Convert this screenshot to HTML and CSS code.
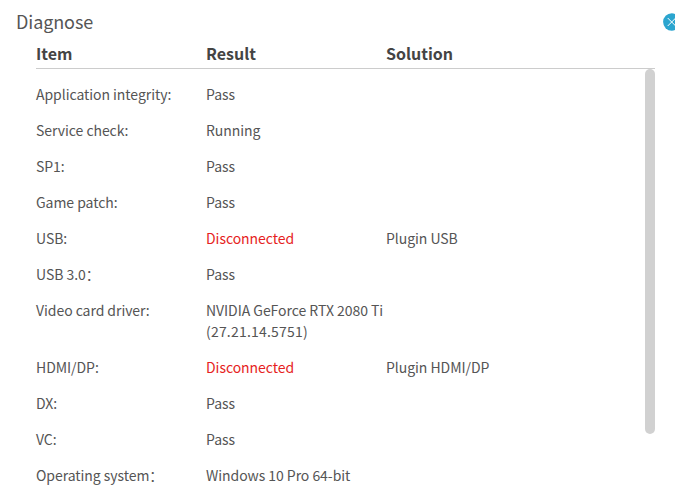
FILE: index.html
```html
<!DOCTYPE html>
<html lang="en"><head><meta charset="utf-8"><title>Diagnose</title><link rel="stylesheet" href="styles.css"></head>
<body><main class="dialog">
<header class="titlebar"><h1>Diagnose</h1><svg class="close" width="12" height="18" viewBox="0 0 12 18"><circle cx="8.8" cy="9" r="8.7" fill="#2ba5cf"/><path d="M4.7 5l8 8M12.7 5l-8 8" stroke="#fff" stroke-width="1"/></svg></header>
<section class="report">
<div class="row head"><b>Item</b><b>Result</b><b>Solution</b></div>
<div class="list">
<div class="row"><span>Application integrity:</span><span>Pass</span></div>
<div class="row"><span>Service check:</span><span>Running</span></div>
<div class="row"><span>SP1:</span><span>Pass</span></div>
<div class="row"><span>Game patch:</span><span>Pass</span></div>
<div class="row"><span>USB:</span><span class="bad">Disconnected</span><span>Plugin USB</span></div>
<div class="row"><span>USB 3.0：</span><span>Pass</span></div>
<div class="row"><span>Video card driver:</span><span>NVIDIA GeForce RTX 2080 Ti<br><span class="version">(27.21.14.5751)</span></span></div>
<div class="row"><span>HDMI/DP:</span><span class="bad">Disconnected</span><span>Plugin HDMI/DP</span></div>
<div class="row"><span>DX:</span><span>Pass</span></div>
<div class="row"><span>VC:</span><span>Pass</span></div>
<div class="row"><span>Operating system：</span><span>Windows 10 Pro 64-bit</span></div>
<i class="thumb"></i>
</div></section></main></body></html>
```
FILE: styles.css
```css
*{box-sizing:border-box}
body{margin:0;background:#fff;color:#555;font:14px/21px "Noto Sans CJK SC",sans-serif;overflow:hidden}
.dialog{height:494px;overflow:hidden}
.titlebar{height:40px;padding:4px 0 0 16px;display:flex;justify-content:space-between}
.titlebar h1{margin:0;font-size:18px;font-weight:400;line-height:34px;letter-spacing:-.1px}
.close{margin-top:9px}
.report{margin:0 20px 0 36px}
.row{display:grid;grid-template-columns:170px 180px 1fr;margin-bottom:15px;white-space:nowrap;letter-spacing:-.05px}
.head{height:29px;margin:0;border-bottom:1px solid #ccc;font-size:16px;line-height:26px;color:#444;letter-spacing:0}
.list{position:relative;padding-top:15px}
.bad{color:#e61e22}
.version{letter-spacing:.2px}
.thumb{position:absolute;right:0;top:0;width:10px;height:365px;border-radius:5px;background:#d1d1d1}
```
